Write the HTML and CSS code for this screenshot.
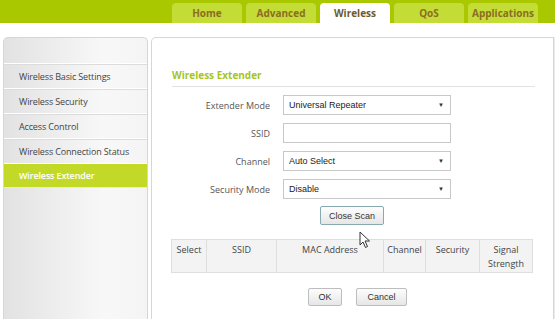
FILE: index.html
```html
<!DOCTYPE html>
<html>
<head>
<meta charset="utf-8">
<link rel="stylesheet" href="styles.css">
</head>
<body>
<div class="topbar">
  <div class="tabs">
    <div class="tab">Home</div>
    <div class="tab">Advanced</div>
    <div class="tab active">Wireless</div>
    <div class="tab">QoS</div>
    <div class="tab">Applications</div>
  </div>
</div>
<div class="main">
  <div class="side">
    <div class="side-head"></div>
    <div class="side-item">Wireless Basic Settings</div>
    <div class="side-item">Wireless Security</div>
    <div class="side-item">Access Control</div>
    <div class="side-item">Wireless Connection Status</div>
    <div class="side-item active">Wireless Extender</div>
  </div>
  <div class="content">
    <div class="title">Wireless Extender</div>
    <div class="form">
      <div class="label">Extender Mode</div>
      <div class="field select"><span>Universal Repeater</span><span class="arrow">▼</span></div>
      <div class="label">SSID</div>
      <div class="field"></div>
      <div class="label">Channel</div>
      <div class="field select"><span>Auto Select</span><span class="arrow">▼</span></div>
      <div class="label">Security Mode</div>
      <div class="field select"><span>Disable</span><span class="arrow">▼</span></div>
    </div>
    <div class="scan-row"><div class="btn scan">Close Scan</div></div>
    <div class="table">
      <div class="col c1">Select</div>
      <div class="col c2">SSID</div>
      <div class="col c3">MAC Address</div>
      <div class="col c4">Channel</div>
      <div class="col c5">Security</div>
      <div class="col c6">Signal<br>Strength</div>
    </div>
    <div class="actions">
      <div class="btn ok">OK</div>
      <div class="btn cancel">Cancel</div>
    </div>
    <svg class="cursor" width="12" height="18" viewBox="0 0 12 18"><path d="M1 1 L1 14 L4 11 L6.5 16.5 L8.5 15.5 L6 10 L10.5 10 Z" fill="#fff" stroke="#333" stroke-width="1" stroke-linejoin="round"/></svg>
  </div>
</div>
</body>
</html>
```
FILE: styles.css
```css
* { box-sizing: border-box; }
html, body { margin: 0; padding: 0; background: #fff; }
body { width: 555px; height: 319px; overflow: hidden; font-family: "Open Sans", "DejaVu Sans", sans-serif; }
.topbar { height: 23px; background: #a9c800; display: flex; align-items: flex-end; }
.tabs { display: flex; gap: 4px; padding-left: 172px; }
.tab { width: 70px; height: 20px; background: #c3dc36; border-radius: 4px 4px 0 0; display: flex; align-items: center; justify-content: center; font-size: 10px; font-weight: bold; color: #8c6d22; }
.tab.active { background: #fff; color: #6e5a2c; }
.main { display: flex; gap: 3px; margin-top: 14px; padding-left: 3px; }
.side { width: 145px; height: 290px; border: 1px solid #d6d6d6; border-bottom: none; border-radius: 5px 5px 0 0; background: linear-gradient(to right, #e2e2e2, #f8f8f8 70%, #f4f4f4); }
.side-head { height: 25px; }
.side-item { height: 25px; border-top: 1px solid #fff; box-shadow: inset 0 1px 0 #dcdcdc; padding-left: 15px; display: flex; align-items: center; font-size: 9px; letter-spacing: -0.15px; color: #444; }
.side-item.active { background: #c3d927; color: #fff; font-weight: 600; border-bottom: 1px solid #eaf5a0; box-shadow: none; }
.content { position: relative; width: 403px; height: 290px; border: 1px solid #d6d6d6; border-bottom: none; border-radius: 5px 0 0 0; padding: 30px 0 0 20px; box-shadow: 2px 0 0 #ececec; }
.title { width: 363px; font-size: 10px; font-weight: bold; color: #a6c51e; line-height: 14px; padding-bottom: 4px; border-bottom: 1px solid #e2e2e2; }
.form { display: grid; grid-template-columns: 98px 168px; column-gap: 13px; row-gap: 8px; margin-top: 8px; }
.label { font-size: 9px; color: #555; text-align: right; display: flex; align-items: center; justify-content: flex-end; height: 20px; }
.field { height: 20px; border: 1px solid #c8c8c8; background: #fff; font-family: "Liberation Sans", Arial, sans-serif; font-size: 9px; color: #222; display: flex; align-items: center; justify-content: space-between; padding: 0 6px 0 5px; }
.arrow { font-size: 6px; color: #333; }
.scan-row { margin-top: 7px; padding-left: 148px; }
.btn { height: 19px; display: flex; align-items: center; justify-content: center; font-family: "Liberation Sans", Arial, sans-serif; font-size: 9px; color: #333; border: 1px solid #bdbdbd; border-radius: 2px; background: linear-gradient(#fdfdfd, #e6e6e6); }
.btn.scan { width: 64px; border-color: #86aab0; }
.table { display: flex; margin-top: 14px; margin-left: -1px; width: 362px; height: 34px; border: 1px solid #dedede; background: #f3f3f3; }
.col { border-left: 1px solid #dedede; font-size: 9px; color: #444; text-align: center; padding-top: 3px; line-height: 14px; }
.col:first-child { border-left: none; }
.c1 { width: 34px; }
.c2 { width: 70px; }
.c3 { width: 107px; }
.c4 { width: 42px; }
.c5 { width: 54px; }
.c6 { flex: 1; }
.actions { display: flex; gap: 14px; margin-top: 15px; padding-left: 136px; }
.btn.ok { width: 34px; height: 18px; }
.btn.cancel { width: 51px; height: 18px; }
.cursor { position: absolute; left: 207px; top: 193px; }
```
